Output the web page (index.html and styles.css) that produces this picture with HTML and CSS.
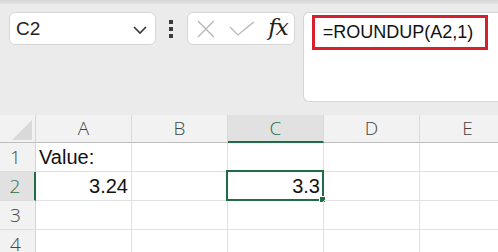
FILE: index.html
```html
<!DOCTYPE html>
<html>
<head>
<meta charset="utf-8">
<link rel="stylesheet" href="styles.css">
</head>
<body>
<div class="strip"></div>
<div class="toolbar">
  <div class="namebox">
    <span class="nb-text">C2</span>
    <svg class="chev" width="14" height="8" viewBox="0 0 14 8"><path d="M1 1 L7 7 L13 1" fill="none" stroke="#333" stroke-width="1.6"/></svg>
  </div>
  <div class="dots"><i></i><i></i><i></i></div>
  <div class="fxbox">
    <svg width="20" height="18" viewBox="0 0 20 18"><path d="M2 1 L18 17 M18 1 L2 17" stroke="#b8b8b8" stroke-width="1.4" fill="none"/></svg>
    <svg width="26" height="16" viewBox="0 0 26 16"><path d="M1 6 L9 14 L25 1" stroke="#b8b8b8" stroke-width="1.4" fill="none"/></svg>
    <span class="fx">fx</span>
  </div>
  <div class="formulabar">
    <div class="formula">=ROUNDUP(A2,1)</div>
  </div>
</div>
<div class="sheet">
  <div class="corner"><div class="tri"></div></div>
  <div class="ch">A</div>
  <div class="ch">B</div>
  <div class="ch sel">C</div>
  <div class="ch">D</div>
  <div class="ch">E</div>

  <div class="rh">1</div>
  <div class="cell">Value:</div>
  <div class="cell"></div>
  <div class="cell"></div>
  <div class="cell"></div>
  <div class="cell"></div>

  <div class="rh sel">2</div>
  <div class="cell num">3.24</div>
  <div class="cell"></div>
  <div class="cell num active">3.3<span class="selbox"><span class="handle"></span></span></div>
  <div class="cell"></div>
  <div class="cell"></div>

  <div class="rh">3</div>
  <div class="cell"></div>
  <div class="cell"></div>
  <div class="cell"></div>
  <div class="cell"></div>
  <div class="cell"></div>

  <div class="rh">4</div>
  <div class="cell"></div>
  <div class="cell"></div>
  <div class="cell"></div>
  <div class="cell"></div>
  <div class="cell"></div>
</div>
</body>
</html>
```
FILE: styles.css
```css
* { box-sizing: border-box; }
html, body { margin: 0; padding: 0; }
body {
  width: 498px;
  height: 252px;
  overflow: hidden;
  background: #ebebeb;
  font-family: "Liberation Sans", Arial, sans-serif;
  color: #111;
}
.strip {
  height: 4px;
  background: linear-gradient(#d6d6d6, #e4e4e4);
}
.toolbar {
  display: flex;
  align-items: flex-start;
  padding: 8px 0 0 9px;
  height: 111px;
  overflow: hidden;
}
.namebox {
  width: 150px;
  height: 33px;
  background: #fff;
  border: 1px solid #d6d6d6;
  border-radius: 6px;
  display: flex;
  align-items: center;
  justify-content: space-between;
  padding: 0 8px 0 6px;
}
.nb-text { font-size: 19px; color: #222; }
.chev { margin-top: 2px; }
.dots {
  width: 32px;
  height: 33px;
  display: flex;
  flex-direction: column;
  align-items: center;
  justify-content: center;
  gap: 3px;
}
.dots i {
  display: block;
  width: 4px;
  height: 4px;
  background: #3a3a3a;
}
.fxbox {
  width: 108px;
  height: 33px;
  background: #fff;
  border: 1px solid #d6d6d6;
  border-radius: 6px;
  display: flex;
  align-items: center;
  padding: 0 6px 0 8px;
  gap: 13px;
}
.fx {
  font-family: "DejaVu Serif", "Liberation Serif", serif;
  font-style: italic;
  font-size: 23px;
  color: #222;
  margin-left: 1px;
  letter-spacing: -1px;
  line-height: 1;
  margin-top: -2px;
}
.formulabar {
  margin-left: 8px;
  width: 200px;
  height: 90px;
  background: #fff;
  border: 1px solid #d6d6d6;
  border-right: none;
  border-radius: 6px 0 0 6px;
  padding: 2px 0 0 8px;
}
.formula {
  display: inline-block;
  border: 3px solid #d7202e;
  padding: 2px 5px 4px 8px;
  width: 176px;
  height: 35px;
  font-size: 18px;
  color: #111;
  line-height: 25px;
}
.sheet {
  display: grid;
  grid-template-columns: 36px repeat(5, 96px);
  grid-template-rows: 28px repeat(4, 29px);
  background: #fff;
}
.corner {
  background: #f2f2f2;
  border-right: 1px solid #d4d4d4;
  border-bottom: 1px solid #bdbdbd;
  position: relative;
}
.tri {
  position: absolute;
  right: 3px;
  bottom: 2px;
  width: 0;
  height: 0;
  border-left: 20px solid transparent;
  border-bottom: 20px solid #d9d9d9;
}
.ch {
  background: #f2f2f2;
  border-right: 1px solid #d9d9d9;
  border-bottom: 1px solid #bdbdbd;
  text-align: center;
  font-family: "Open Sans", sans-serif;
  font-weight: 300;
  font-size: 19px;
  line-height: 27px;
  color: #444;
}
.ch.sel {
  background: #e1e1e1;
  color: #1e6e45;
  border-bottom: 2px solid #1e6e45;
}
.rh {
  background: #f2f2f2;
  border-right: 1px solid #d4d4d4;
  border-bottom: 1px solid #dcdcdc;
  text-align: center;
  font-family: "Open Sans", sans-serif;
  font-weight: 300;
  font-size: 19px;
  line-height: 28px;
  color: #444;
  padding-right: 4px;
}
.rh.sel {
  background: #e1e1e1;
  color: #1e6e45;
  border-right: 2px solid #1e6e45;
}
.cell {
  border-right: 1px solid #e1e1e1;
  border-bottom: 1px solid #e1e1e1;
  font-size: 20px;
  line-height: 29px;
  padding: 0 3px;
  color: #111;
  position: relative;
}
.cell.num { text-align: right; }
.selbox {
  position: absolute;
  left: -2px;
  top: -2px;
  right: -1px;
  bottom: -1px;
  border: 2px solid #1e6e45;
}
.handle {
  position: absolute;
  right: -4px;
  bottom: -4px;
  width: 7px;
  height: 7px;
  background: #1e6e45;
  border: 1px solid #fff;
}
```
